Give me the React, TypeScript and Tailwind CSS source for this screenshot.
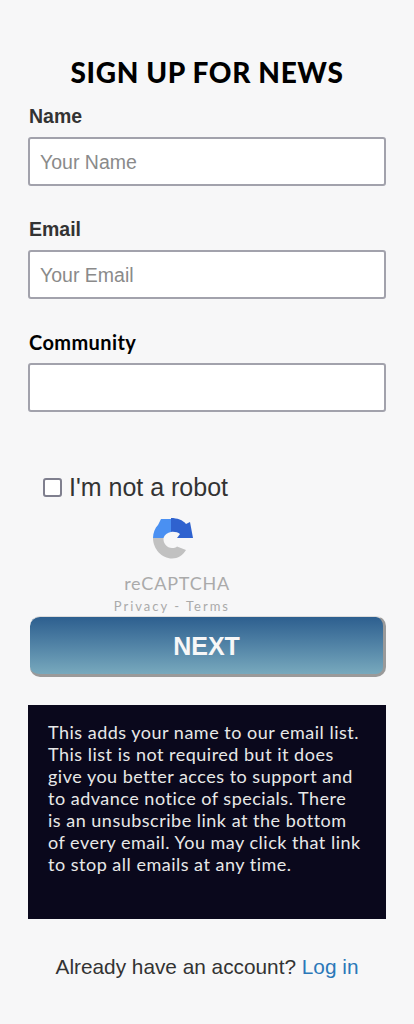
const sans = "font-['Liberation_Sans',Arial,sans-serif]";

function Field({ label, placeholder, geo }: { label: string; placeholder?: string; geo?: boolean }) {
  return (
    <div className="flex flex-col">
      <label
        className={
          geo
            ? "h-[27px] pl-px text-[20px] leading-[27px] font-bold tracking-[0.4px] text-black font-['Lato',sans-serif]"
            : `h-[27px] pl-px text-[19.5px] leading-[27px] font-bold text-[#333] ${sans}`
        }
      >
        {label}
      </label>
      <input
        placeholder={placeholder}
        className={`mt-[7px] h-[49px] w-full rounded-[3px] border-2 border-[#a2a2ac] bg-white px-[10px] pt-[1px] text-[19.5px] text-[#333] outline-none placeholder:text-[#8a8a8a] ${sans}`}
      />
    </div>
  );
}

function RecaptchaLogo() {
  return (
    <svg width="42" height="43" viewBox="0 0 42 43" className="block">
      <path d="M1 21C1 16 3 11 6 8L9 2H19V15C15.500 15.500 12.500 17.500 11.500 21Z" fill="#4a90f2" />
      <path d="M19 1C25 1 31 3 34 7L38 5L41 21H25L28 17C26 15.500 22.500 14.500 19 15Z" fill="#2f62cf" />
      <path d="M1 21H11.500C11 26.500 15 31 20 31C22 31 24 30.500 25 29.500L34 33C31 38 26 41.500 20 41.500C10 41.500 1 32 1 21Z" fill="#c1c1c1" />
    </svg>
  );
}

const infoLines = [
  "This adds your name to our email list.",
  "This list is not required but it does",
  "give you better acces to support and",
  "to advance notice of specials. There",
  "is an unsubscribe link at the bottom",
  "of every email. You may click that link",
  "to stop all emails at any time.",
];

export default function App() {
  return (
    <div className="min-h-[1024px] w-full bg-[#f7f7f8] px-[28px] pt-[54px]">
      <h1 className="h-[37px] text-center text-[28px] leading-[37px] font-black tracking-[0.65px] text-black font-['Lato',sans-serif]">
        SIGN UP FOR NEWS
      </h1>
      <div className="mt-[12px] flex flex-col gap-[30px]">
        <Field label="Name" placeholder="Your Name" />
        <Field label="Email" placeholder="Your Email" />
        <Field label="Community" geo />
      </div>

      <div className="mt-[60px] ml-[15px] flex h-[30px] items-center gap-[7px]">
        <span className="h-[19px] w-[19px] rounded-[3px] border-2 border-[#7f7f8e] bg-white" />
        <span className={`text-[25px] leading-[30px] text-[#333] ${sans}`}>I'm not a robot</span>
      </div>

      <div className="mt-[15px] flex w-[202px] flex-col items-end">
        <div className="mr-[36px]">
          <RecaptchaLogo />
        </div>
        <div className="mt-[11px] h-[24px] text-[18px] leading-[24px] tracking-[0.8px] text-[#aaa] font-['Lato',sans-serif]">
          reCAPTCHA
        </div>
        <div className="mt-[3px] h-[16px] text-[13px] leading-[16px] tracking-[2px] text-[#aaa] font-['Lato',sans-serif]">
          Privacy - Terms
        </div>
      </div>

      <button
        className={`mt-[2px] ml-[2px] block h-[61px] w-[356px] rounded-[10px] border-t border-r-[3px] border-b-[3px] border-[#9a9a9a] border-t-[#dcdcdc] bg-gradient-to-b from-[#2d5f8f] to-[#78a9bd] pt-[3px] text-[25px] font-bold text-[#f7f7f7] ${sans}`}
      >
        NEXT
      </button>

      <div className="mt-[28px] h-[214px] bg-[#0a081c] pt-[16px] pl-[20px] text-[18px] leading-[22px] tracking-[0.5px] text-[#e8e8e8] font-['Lato',sans-serif]">
        {infoLines.map((line) => (
          <div key={line} className="whitespace-nowrap">
            {line}
          </div>
        ))}
      </div>

      <p className={`mt-[35px] text-center text-[20.8px] leading-[26px] text-[#333] ${sans}`}>
        Already have an account? <a className="text-[#2b78b8]">Log in</a>
      </p>
    </div>
  );
}
